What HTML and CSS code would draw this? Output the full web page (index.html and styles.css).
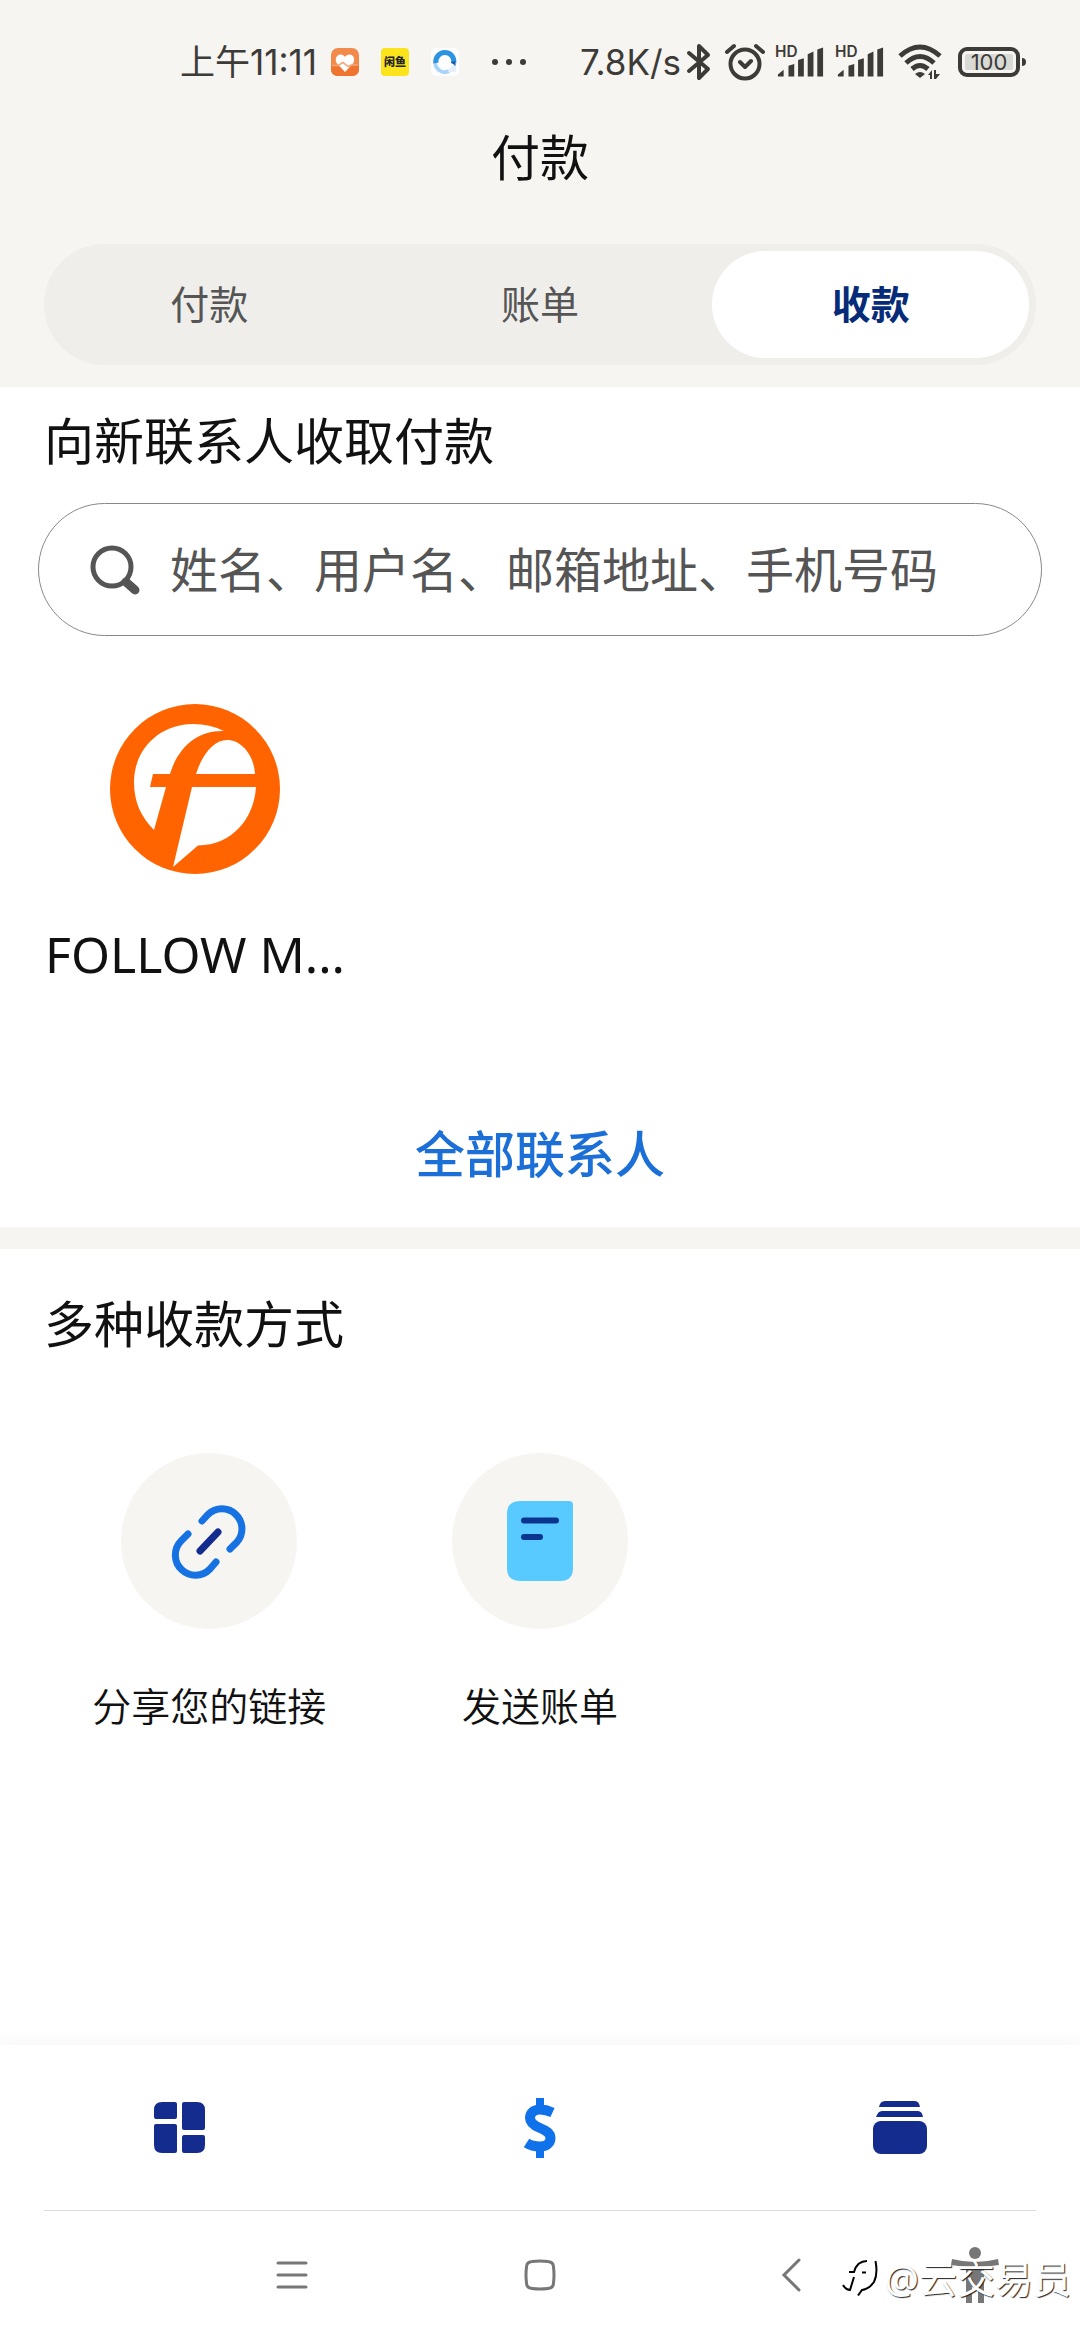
FILE: index.html
```html
<!DOCTYPE html>
<html lang="zh-CN">
<head>
<meta charset="utf-8">
<meta name="viewport" content="width=device-width, initial-scale=1">
<title>付款</title>
<link rel="stylesheet" href="styles.css">
</head>
<body>
<div class="app">
  <header class="header">
    <div class="status">
      <div class="status-left">
        <span class="status-text">上午11:11</span>
        <svg class="app-icon" viewBox="0 0 28 28" aria-hidden="true"><rect width="28" height="28" rx="7" fill="#f28a4c"/><path d="M0 17H28V21Q28 28 21 28H7Q0 28 0 21Z" fill="#ee742f"/><path d="M14 24L6 15.500C3.500 12 5 6.500 9.500 6.500C12 6.500 13.500 8 14 9C14.500 8 16 6.500 18.500 6.500C23 6.500 24.500 12 22 15.500Z" fill="#fff"/><path d="M1 17.500H7L12 14.500L17 18.500L20 17H27" fill="none" stroke="#f5a676" stroke-width="1.500"/></svg>
        <svg class="app-icon" viewBox="0 0 28 28" aria-hidden="true"><rect width="28" height="28" rx="4" fill="#fbe41c"/><text class="mini" x="14" y="18" text-anchor="middle">闲鱼</text></svg>
        <svg class="app-icon" viewBox="0 0 28 28" aria-hidden="true"><rect width="28" height="28" rx="5" fill="#fdfdfd"/><path d="M18 23A9.500 9.500 0 0 1 6 9" fill="none" stroke="#a9d3f7" stroke-width="4"/><path d="M5 15A9 9 0 1 1 22.500 16" fill="none" stroke="#2b93e0" stroke-width="5"/><path d="M20 19L25 14V24H17Z" fill="#e3effb"/><path d="M20 14L24.500 13V18Z" fill="#155ca8"/></svg>
        <svg class="dots" viewBox="0 0 36 8" aria-hidden="true"><circle cx="4" cy="4" r="3"/><circle cx="18" cy="4" r="3"/><circle cx="32" cy="4" r="3"/></svg>
      </div>
      <div class="status-right">
        <span class="status-text">7.8K/s</span>
        <svg class="bt" viewBox="0 0 24 38" aria-hidden="true"><path d="M2 10L21 26L12 35V3L21 12L2 28" class="line"/></svg>
        <svg class="alarm" viewBox="0 0 40 38" aria-hidden="true"><circle cx="20" cy="21" r="14.500" class="line"/><path d="M2 9L9 3M38 9L31 3M15 19L20 24L26 18" class="line"/></svg>
        <svg class="signal" viewBox="0 0 52 34" aria-hidden="true"><text class="hd" x="0" y="12">HD</text><path d="M3 32V30L9 25V32ZM14 32V21L20 19V32ZM24 32V15L30 13V32ZM34 32V9L40 6V32ZM44 32V4L50 2V32Z"/></svg>
        <svg class="signal" viewBox="0 0 52 34" aria-hidden="true"><text class="hd" x="0" y="12">HD</text><path d="M3 32V30L9 25V32ZM14 32V21L20 19V32ZM24 32V15L30 13V32ZM34 32V9L40 6V32ZM44 32V4L50 2V32Z"/></svg>
        <svg class="wifi" viewBox="0 0 46 36" aria-hidden="true"><path d="M3 12Q23 -6 43 12M9 19Q23 6 37 19M15 25Q23 18 31 25"/><path class="wifi-fill" d="M18 30Q23 26 28 30L23 34ZM31 31L35 26V35H33V31ZM37 26H39V30H43L39 35H37Z"/></svg>
        <svg class="battery" viewBox="0 0 70 30" aria-hidden="true"><rect x="2" y="2" width="58" height="26" rx="7" class="line"/><rect x="7" y="7" width="48" height="16" rx="2" fill="#d9d9d6"/><path d="M64 11Q68 11 68 15Q68 19 64 19Z"/><text class="level" x="31" y="23" text-anchor="middle">100</text></svg>
      </div>
    </div>
    <h1 class="title">付款</h1>
    <nav class="segments" aria-label="付款类型">
      <button class="segment" type="button">付款</button>
      <button class="segment" type="button">账单</button>
      <button class="segment segment-active" type="button">收款</button>
    </nav>
  </header>

  <main class="main">
    <section class="contacts">
      <h2 class="heading"><label for="search">向新联系人收取付款</label></h2>
      <div class="search">
        <svg class="search-icon" viewBox="0 0 50 50" aria-hidden="true"><circle cx="22" cy="22" r="19" fill="none" stroke="#555" stroke-width="5"/><path d="M36 37L45 45" stroke="#555" stroke-width="9" stroke-linecap="round"/></svg>
        <input class="search-input" id="search" type="text" placeholder="姓名、用户名、邮箱地址、手机号码">
      </div>
      <a class="contact" href="#contact">
        <svg class="avatar" viewBox="0 0 170 170" aria-hidden="true"><circle cx="85" cy="85" r="85" fill="#ff6400"/><g fill="#fff"><path d="M114 27Q100 20 83 20C50 20 24 45 24 78C24 98 31 113 44 126L56 83H40L43 70H60C68 43 88 26 114 27Z"/><path d="M86 70C93 48 105 36 117 36C132 36 144 52 145 70Z"/><path d="M82 83H146C144 115 122 141 88 141.500L63 163Z"/></g></svg>
        <span class="contact-name">FOLLOW M...</span>
      </a>
      <a class="all-contacts" href="#all">全部联系人</a>
    </section>

    <section class="methods">
      <h2 class="heading">多种收款方式</h2>
      <div class="method-grid">
        <button class="method" type="button">
          <span class="method-icon"><svg class="glyph" viewBox="0 0 78 78" aria-hidden="true"><g fill="none" stroke-width="7" stroke-linecap="round"><path d="M32 19L38 12.500A20 20 0 0 1 67 40L60 47M18 32L11 39A20 20 0 0 0 40 67L46 60" stroke="#1672e2"/><path d="M48 30L30 49" stroke="#142c8e"/></g></svg></span>
          <span class="method-label">分享您的链接</span>
        </button>
        <button class="method" type="button">
          <span class="method-icon"><svg class="glyph" viewBox="0 0 78 78" aria-hidden="true"><path d="M19 -1H68Q72 -1 72 3V66Q72 79 59 79H19Q6 79 6 66V12Q6 -1 19 -1Z" fill="#59caff"/><path d="M23 18.500H55M23 35H39" stroke="#0c3590" stroke-width="6" stroke-linecap="round"/></svg></span>
          <span class="method-label">发送账单</span>
        </button>
      </div>
    </section>
  </main>

  <footer class="footer">
    <nav class="tabs" aria-label="主导航">
      <a class="tab" href="#home" aria-label="主页"><svg class="tab-icon" viewBox="0 0 54 54" aria-hidden="true"><path d="M9 1H22Q24 1 24 3V16Q24 18 22 18H3Q1 18 1 16V9Q1 1 9 1ZM31 1H44Q52 1 52 9V27Q52 29 50 29H31Q29 29 29 27V3Q29 1 31 1ZM3 23H22Q24 23 24 25V50Q24 52 22 52H9Q1 52 1 44V25Q1 23 3 23ZM31 34H50Q52 34 52 36V44Q52 52 44 52H31Q29 52 29 50V36Q29 34 31 34Z"/></svg></a>
      <a class="tab" href="#pay" aria-label="付款"><svg class="pay-icon" viewBox="0 0 60 60" aria-hidden="true"><path d="M42.500 14.500Q36 11.500 30 11.500C24 11.500 20 15 20 20C20 25 24 27.500 30 30C36 32.500 40.500 35 40.500 40C40.500 45.500 36 48.500 30 48.500Q22 48.500 16.500 45" stroke-width="10"/><path d="M30 0V9M30 51V60" stroke-width="8"/></svg></a>
      <a class="tab" href="#wallet" aria-label="钱包"><svg class="tab-icon" viewBox="0 0 54 54" aria-hidden="true"><path d="M6 6Q7 0 12 0H42Q46 0 47 6ZM3 16Q5 10 9 10H45Q49 10 50 16Z"/><rect y="20" width="54" height="33" rx="8"/></svg></a>
    </nav>
    <div class="system">
      <button class="sys" type="button" aria-label="菜单"><svg class="sys-icon" viewBox="0 0 32 32" aria-hidden="true"><path d="M2 4H30M2 16H30M2 28H30"/></svg></button>
      <button class="sys" type="button" aria-label="主屏幕"><svg class="sys-icon" viewBox="0 0 32 32" aria-hidden="true"><path d="M8 2.500Q16 1.500 24 2.500Q29.500 3 29.500 8Q30.500 16 29.500 24Q29.500 29 24 29.500Q16 30.500 8 29.500Q2.500 29 2.500 24Q1.500 16 2.500 8Q2.500 3 8 2.500Z"/></svg></button>
      <button class="sys" type="button" aria-label="返回"><svg class="sys-icon" viewBox="0 0 32 32" aria-hidden="true"><path d="M27 1L12 16L27 31"/></svg></button>
      <button class="sys sys-access" type="button" aria-label="辅助功能"><svg class="access-icon" viewBox="0 0 48 56" aria-hidden="true"><circle cx="24" cy="6" r="6"/><path d="M1 12Q24 18 47 12L48 18L33 20V56H27V40H21V56H15V20L0 18Z"/></svg></button>
      <div class="watermark"><svg class="mark" viewBox="0 0 38 42" aria-hidden="true"><path d="M0 28Q3 33 7 33L11 20M6 15H11Q14 4 24 4M19 15.500H23M32.500 4Q35 17 31 25Q26 32 19 33L15 38.500" fill="none" stroke="#000" stroke-width="2"/></svg><span>@云交易员</span></div>
    </div>
  </footer>
</div>
</body>
</html>
```
FILE: styles.css
```css
* { box-sizing: border-box; }

body {
  margin: 0;
  background: #fff;
  color: #111;
  font-family: "Noto Sans", "Noto Sans CJK SC", sans-serif;
}

button {
  margin: 0;
  padding: 0;
  border: 0;
  background: none;
  color: inherit;
  font: inherit;
}

a { color: inherit; text-decoration: none; }
svg { display: block; flex: none; overflow: visible; }

.app {
  display: flex;
  flex-direction: column;
  min-height: 100vh;
}

.header {
  padding-bottom: 22px;
  background: #f6f5f1;
}

/* Status bar */
.status {
  display: flex;
  align-items: center;
  justify-content: space-between;
  height: 124px;
  padding: 0 52px 0 180px;
  color: #3d3b37;
  fill: #3d3b37;
}

.status-left, .status-right { display: flex; align-items: center; }
.status-left { gap: 22px; }
.status-right { gap: 10px; }
.status-text {
  font: 35px/48px Inter, "Noto Sans CJK SC", sans-serif;
  white-space: nowrap;
}
.status-left .status-text { margin-right: -8px; }
.app-icon { width: 28px; height: 28px; }
.dots { width: 36px; height: 8px; margin-left: 10px; }
.bt { width: 24px; height: 38px; margin-left: -4px; }
.alarm { width: 40px; height: 38px; margin-left: 4px; }
.signal { width: 50px; height: 34px; }
.wifi {
  width: 46px;
  height: 36px;
  margin-left: 2px;
  fill: none;
  stroke: #3d3b37;
  stroke-width: 5px;
}
.wifi-fill { fill: #3d3b37; stroke: none; }
.battery { width: 70px; height: 30px; margin-left: 5px; }
.line {
  fill: none;
  stroke: #3d3b37;
  stroke-width: 4px;
  stroke-linecap: round;
  stroke-linejoin: round;
}
.mini { font: 900 11px "Noto Sans CJK SC", sans-serif; fill: #222; }
.hd { font: 600 16px Inter, sans-serif; }
.level { font: 22px Inter, sans-serif; }

.title {
  margin: 0;
  font-size: 49px;
  font-weight: 400;
  line-height: 66px;
  text-align: center;
}

.segments {
  display: grid;
  grid-template-columns: repeat(3, 1fr);
  margin: 54px 44px 0;
  border-radius: 61px;
  background: #efeeea;
}

.segment {
  height: 107px;
  margin: 7px;
  padding-bottom: 6px;
  border-radius: 54px;
  color: #555;
  font-size: 39px;
}

.segment-active {
  background: #fff;
  color: #062b78;
  font-weight: 700;
}

/* Content */
.main { flex: 1; }

.heading {
  margin: 0;
  font-size: 50px;
  font-weight: 400;
  line-height: 60px;
}

.contacts {
  display: flex;
  flex-direction: column;
  padding: 24px 38px 43px;
  border-bottom: 22px solid #f6f5f1;
}

.contacts .heading { padding-left: 6px; }

.search {
  display: flex;
  align-items: center;
  gap: 30px;
  height: 133px;
  margin-top: 32px;
  padding: 0 50px 0 51px;
  border: 1px solid #888;
  border-radius: 67px;
}

.search-icon { width: 50px; height: 50px; }

.search-input {
  flex: 1;
  min-width: 0;
  height: 78px;
  padding: 0 0 6px;
  border: 0;
  outline: 0;
  background: none;
  color: #555;
  font: 48px/72px "Noto Sans CJK SC", sans-serif;
}

.search-input::placeholder { color: #555; opacity: 1; }

.contact {
  display: flex;
  flex-direction: column;
  align-items: center;
  align-self: flex-start;
  gap: 50px;
  width: 302px;
  margin: 68px 0 0 6px;
}

.avatar { width: 170px; height: 170px; }
.contact-name { font-size: 50px; line-height: 60px; white-space: nowrap; }

.all-contacts {
  align-self: center;
  margin-top: 140px;
  color: #1c6fd6;
  font-size: 50px;
  font-weight: 500;
  line-height: 60px;
}

.methods { padding: 45px 44px 40px; }

.method-grid {
  display: grid;
  grid-template-columns: repeat(3, 1fr);
  margin-top: 99px;
}

.method {
  display: flex;
  flex-direction: column;
  align-items: center;
  gap: 52px;
}

.method-icon {
  display: grid;
  place-items: center;
  width: 176px;
  height: 176px;
  border-radius: 50%;
  background: #f6f5f1;
}

.glyph { width: 78px; height: 78px; }
.method-label { font-size: 39px; font-weight: 350; line-height: 50px; }

/* Bottom navigation */
.footer {
  background: #fff;
  box-shadow: 0 -4px 16px rgba(0, 0, 0, 0.04);
}

.tabs {
  display: grid;
  grid-template-columns: repeat(3, 1fr);
  height: 165px;
}

.tab { display: grid; place-items: center; }
.tab-icon { width: 54px; height: 54px; fill: #142c8e; }
.pay-icon { width: 60px; height: 60px; fill: none; stroke: #1072eb; }

.system {
  position: relative;
  display: flex;
  height: 130px;
  padding: 0 42px 0 168px;
}

.system::before {
  content: "";
  position: absolute;
  inset: 0 44px auto;
  border-top: 1px solid #ddd;
}

.sys { display: grid; flex: 1; place-items: center; }
.sys-access { flex: none; width: 126px; }
.sys-icon {
  width: 32px;
  height: 32px;
  fill: none;
  stroke: #777;
  stroke-width: 3px;
  stroke-linecap: round;
}
.access-icon { width: 48px; height: 56px; fill: #777; }

.watermark {
  position: absolute;
  right: 9px;
  bottom: 34px;
  display: flex;
  align-items: center;
  gap: 4px;
  color: #fff;
  font-size: 38px;
  line-height: 56px;
  text-shadow: 1px 1px 1px #222;
  white-space: nowrap;
}

.mark { width: 38px; height: 42px; }
```
